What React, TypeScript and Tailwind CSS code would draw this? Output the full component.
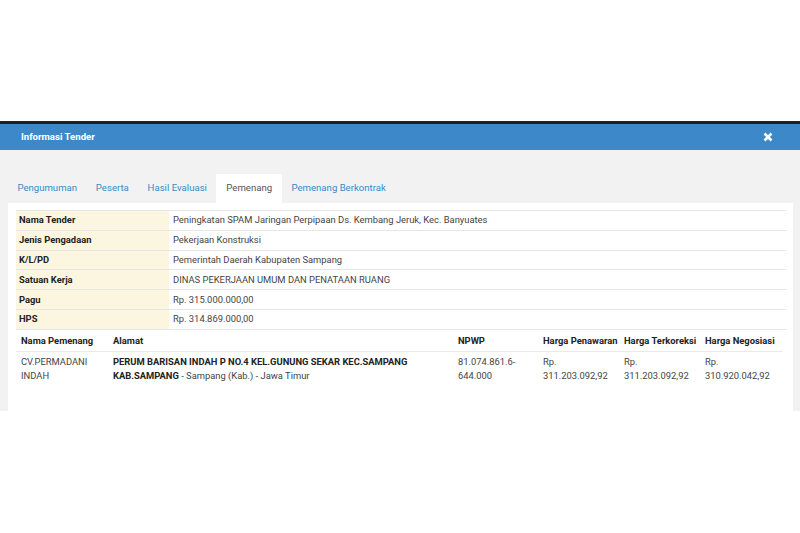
import React from "react";

const info: [string, string][] = [
  ["Nama Tender", "Peningkatan SPAM Jaringan Perpipaan Ds. Kembang Jeruk, Kec. Banyuates"],
  ["Jenis Pengadaan", "Pekerjaan Konstruksi"],
  ["K/L/PD", "Pemerintah Daerah Kabupaten Sampang"],
  ["Satuan Kerja", "DINAS PEKERJAAN UMUM DAN PENATAAN RUANG"],
  ["Pagu", "Rp. 315.000.000,00"],
  ["HPS", "Rp. 314.869.000,00"],
];

const tabs = ["Pengumuman", "Peserta", "Hasil Evaluasi", "Pemenang", "Pemenang Berkontrak"];

export default function App() {
  return (
    <div
      className="w-[800px] h-[533px] bg-white overflow-hidden text-[9.4px] text-[#444]"
      style={{ fontFamily: "Roboto, 'Liberation Sans', sans-serif" }}
    >
      <div className="h-[121px]" />
      <div className="h-[3px] bg-[#1d2125]" />
      <div className="h-[26px] bg-[#3d88c9] flex items-center justify-between pl-[21px] pr-[27px]">
        <span className="text-white font-bold text-[9.6px]">Informasi Tender</span>
        <svg width="10" height="10" viewBox="0 0 10 10">
          <path d="M1.5 1.5 L8.5 8.5 M8.5 1.5 L1.5 8.5" stroke="white" strokeWidth="2.6" strokeLinecap="butt" />
        </svg>
      </div>
      <div className="h-[261px] bg-[#f2f2f2] pt-[24px] pl-[8px] pr-[7px] flex flex-col">
        <div className="flex h-[29px] text-[9.6px]">
          {tabs.map((t) => (
            <div
              key={t}
              className={
                t === "Pemenang"
                  ? "h-[29px] px-[10px] flex items-center bg-white text-[#555]"
                  : "h-[29px] px-[9.4px] flex items-center text-[#3a8ac6]"
              }
            >
              {t}
            </div>
          ))}
        </div>
        <div className="flex-1 bg-white pt-[7px] pl-[8px] pr-[7px]">
          <div className="border-t border-[#e6e6e6]">
            {info.map(([k, v]) => (
              <div key={k} className="flex h-[19.8px] border-b border-[#e6e6e6]">
                <div className="w-[153px] bg-[#fcf6e1] pl-[3px] flex items-center font-bold text-[#222]">{k}</div>
                <div className="flex-1 pl-[4px] flex items-center">{v}</div>
              </div>
            ))}
          </div>
          <div className="mt-[2px] w-[767px]">
            <div className="grid grid-cols-[92px_345px_85px_81px_81px_83px] h-[20px] items-center border-b border-[#eaeaea] font-bold text-[#222] whitespace-nowrap">
              <div className="pl-[5px]">Nama Pemenang</div>
              <div className="pl-[5px]">Alamat</div>
              <div className="pl-[5px]">NPWP</div>
              <div className="pl-[5px]">Harga Penawaran</div>
              <div className="pl-[5px]">Harga Terkoreksi</div>
              <div className="pl-[5px]">Harga Negosiasi</div>
            </div>
            <div className="grid grid-cols-[92px_345px_85px_81px_81px_83px] pt-[3px] leading-[14px]">
              <div className="pl-[5px]">CV.PERMADANI<br />INDAH</div>
              <div className="pl-[5px]">
                <span className="font-bold text-[#222]">PERUM BARISAN INDAH P NO.4 KEL.GUNUNG SEKAR KEC.SAMPANG KAB.SAMPANG</span>
                <span> - Sampang (Kab.) - Jawa Timur</span>
              </div>
              <div className="pl-[5px]">81.074.861.6-<br />644.000</div>
              <div className="pl-[5px]">Rp.<br />311.203.092,92</div>
              <div className="pl-[5px]">Rp.<br />311.203.092,92</div>
              <div className="pl-[5px]">Rp.<br />310.920.042,92</div>
            </div>
          </div>
        </div>
      </div>
    </div>
  );
}
